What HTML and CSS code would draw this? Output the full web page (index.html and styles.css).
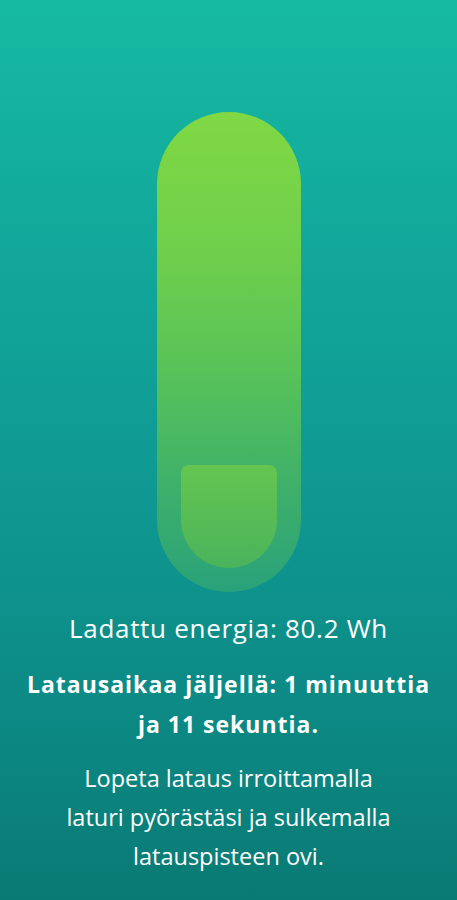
FILE: index.html
```html
<!DOCTYPE html>
<html lang="fi">
<head>
<meta charset="utf-8">
<link rel="stylesheet" href="styles.css">
</head>
<body>
<main class="screen">
  <div class="battery">
    <div class="battery-fill"></div>
  </div>
  <p class="energy">Ladattu energia: 80.2 Wh</p>
  <p class="remaining">Latausaikaa jäljellä: 1 minuuttia<br>ja 11 sekuntia.</p>
  <p class="hint">Lopeta lataus irroittamalla<br>laturi pyörästäsi ja sulkemalla<br>latauspisteen ovi.</p>
</main>
</body>
</html>
```
FILE: styles.css
```css
html, body {
  margin: 0;
  padding: 0;
}
body {
  width: 457px;
  height: 900px;
  overflow: hidden;
}
.screen {
  height: 900px;
  display: flex;
  flex-direction: column;
  align-items: center;
  background: linear-gradient(180deg, #16baa2 0%, #12a99b 25%, #0f9892 55%, #0c8984 80%, #0a7a74 100%);
  color: #ffffff;
  font-family: "Open Sans", "Lato", sans-serif;
  text-align: center;
}
.battery {
  margin-top: 112px;
  width: 144px;
  height: 480px;
  box-sizing: border-box;
  border-radius: 72px;
  padding: 0 24px 24px;
  display: flex;
  flex-direction: column;
  justify-content: flex-end;
  align-items: center;
  background: linear-gradient(180deg, #80d843 0%, #6fcf4c 30%, #57c25a 55%, #3eb06a 78%, #2aa27a 100%);
}
.battery-fill {
  width: 96px;
  height: 103px;
  border-radius: 8px 8px 48px 48px;
  background: linear-gradient(180deg, #64c550 0%, #55bb57 60%, #4ab35c 100%);
}
.energy {
  margin: 16px 0 0;
  font-size: 26px;
  line-height: 40px;
  letter-spacing: 0.7px;
  font-weight: 400;
}
.remaining {
  margin: 16px 0 0;
  font-size: 23px;
  line-height: 40px;
  letter-spacing: 1px;
  font-weight: 700;
}
.hint {
  margin: 15px 0 0;
  font-size: 23.5px;
  line-height: 39px;
  font-weight: 400;
}
```
